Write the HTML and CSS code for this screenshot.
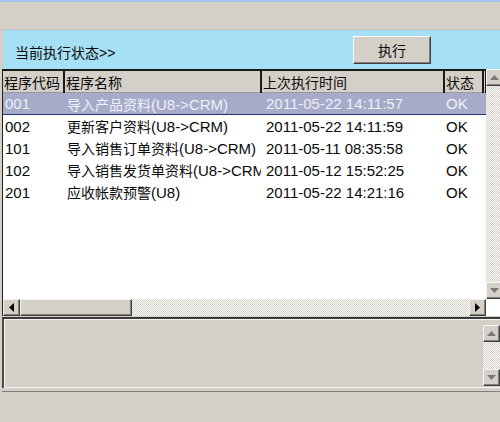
FILE: index.html
```html
<!DOCTYPE html>
<html>
<head>
  <title>程序执行状态</title>
  <link rel="stylesheet" href="styles.css">
</head>
<body>
  <div class="window">
    <div class="topbar"></div>

    <div class="panel">
      <span class="status">当前执行状态&gt;&gt;</span>
      <button class="btn">执行</button>
    </div>

    <div class="grid">
      <div class="grid-main">
        <div class="table-wrap">
          <table class="jobs">
            <colgroup>
              <col class="w-code">
              <col class="w-name">
              <col class="w-time">
              <col class="w-state">
              <col class="w-pad">
            </colgroup>
            <thead>
              <tr>
                <th>程序代码</th>
                <th>程序名称</th>
                <th>上次执行时间</th>
                <th>状态</th>
                <th></th>
              </tr>
            </thead>
            <tbody>
              <tr class="sel">
                <td>001</td>
                <td class="name"><span class="zh">导入产品资料</span>(U8-&gt;CRM)</td>
                <td class="time">2011-05-22 14:11:57</td>
                <td>OK</td>
                <td></td>
              </tr>
              <tr>
                <td>002</td>
                <td class="name"><span class="zh">更新客户资料</span>(U8-&gt;CRM)</td>
                <td class="time">2011-05-22 14:11:59</td>
                <td>OK</td>
                <td></td>
              </tr>
              <tr>
                <td>101</td>
                <td class="name"><span class="zh">导入销售订单资料</span>(U8-&gt;CRM)</td>
                <td class="time">2011-05-11 08:35:58</td>
                <td>OK</td>
                <td></td>
              </tr>
              <tr>
                <td>102</td>
                <td class="name"><span class="zh">导入销售发货单资料</span>(U8-&gt;CRM)</td>
                <td class="time">2011-05-12 15:52:25</td>
                <td>OK</td>
                <td></td>
              </tr>
              <tr>
                <td>201</td>
                <td class="name"><span class="zh">应收帐款预警</span>(U8)</td>
                <td class="time">2011-05-22 14:21:16</td>
                <td>OK</td>
                <td></td>
              </tr>
            </tbody>
          </table>
        </div>

        <div class="vscroll">
          <div class="sbtn">
            <svg width="9" height="5" viewBox="0 0 9 5"><polygon points="4.5,0 9,5 0,5" fill="#7a7a7a"/></svg>
          </div>
          <div class="track"></div>
          <div class="sbtn">
            <svg width="9" height="5" viewBox="0 0 9 5"><polygon points="0,0 9,0 4.5,5" fill="#7a7a7a"/></svg>
          </div>
        </div>
      </div>

      <div class="hscroll">
        <div class="sbtn">
          <svg width="5" height="9" viewBox="0 0 5 9"><polygon points="5,0 5,9 0,4.5" fill="#000"/></svg>
        </div>
        <div class="thumb"></div>
        <div class="track"></div>
        <div class="sbtn">
          <svg width="5" height="9" viewBox="0 0 5 9"><polygon points="0,0 5,4.5 0,9" fill="#000"/></svg>
        </div>
        <div class="corner"></div>
      </div>
    </div>

    <div class="memo">
      <div class="memo-body"></div>
      <div class="vscroll short">
        <div class="sbtn">
          <svg width="9" height="5" viewBox="0 0 9 5"><polygon points="4.5,0 9,5 0,5" fill="#7a7a7a"/></svg>
        </div>
        <div class="track"></div>
        <div class="sbtn">
          <svg width="9" height="5" viewBox="0 0 9 5"><polygon points="0,0 9,0 4.5,5" fill="#7a7a7a"/></svg>
        </div>
      </div>
    </div>

    <div class="footer"></div>
  </div>
</body>
</html>
```

FILE: styles.css
```css
html, body {
  margin: 0;
  height: 422px;
  overflow: hidden;
  background: #d4d0c8;
}
body {
  font-family: "Liberation Sans", "Noto Sans CJK SC", sans-serif;
  font-size: 15px;
  color: #0a0a0a;
}
.window {
  width: 503px;
}
.topbar {
  height: 27px;
  border-top: 2px solid #a3c2ea;
  border-bottom: 1px solid #cdc0bc;
}

/* blue status strip */
.panel {
  display: flex;
  align-items: center;
  height: 39px;
  margin-left: 3px;
  background: #a6e0f4;
}
.status {
  padding: 5px 0 0 12px;
  font-size: 14px;
}
.btn {
  margin: 0 72px 0 auto;
  width: 78px;
  height: 28px;
  font: inherit;
  font-size: 14px;
  color: #0a0a0a;
  background: #d4d0c8;
  border: 1px solid;
  border-color: #fff #404040 #404040 #fff;
  box-shadow: inset -1px -1px 0 #808080;
  padding: 0;
}

/* data grid */
.grid {
  margin-left: 2px;
  border-left: 1px solid #222;
  background: #fff;
}
.grid-main {
  display: flex;
  height: 230px;
}
.table-wrap {
  flex: 1;
  overflow: hidden;
}
.jobs {
  border-collapse: collapse;
  table-layout: fixed;
  width: 483px;
}
.w-code { width: 61px; }
.w-name { width: 197px; }
.w-time { width: 183px; }
.w-state { width: 39px; }
.w-pad { width: 3px; }
.jobs th {
  height: 21px;
  padding: 0 0 0 1px;
  text-align: left;
  font-weight: normal;
  font-size: 14px;
  background: #d4d0c8;
  border-top: 2px solid #1a1a1a;
  border-right: 2px solid #1a1a1a;
  border-bottom: 1px solid #9a9a9a;
  white-space: nowrap;
  overflow: hidden;
}
.jobs td {
  height: 22px;
  padding: 0 0 0 2px;
  white-space: nowrap;
  overflow: hidden;
}
.jobs td.name {
  padding-left: 3px;
}
.jobs td.time {
  padding-left: 5px;
}
.zh {
  font-size: 14px;
}
.jobs tr.sel td {
  height: 21px;
  background: #a7abca;
  color: #eef0f8;
  border-bottom: 1px solid #26307c;
}
.jobs tr.sel td:last-child {
  border-right: 1px solid #26307c;
}

/* scrollbars */
.vscroll {
  display: flex;
  flex-direction: column;
  width: 17px;
}
.hscroll {
  display: flex;
  height: 17px;
}
.sbtn {
  display: flex;
  align-items: center;
  justify-content: center;
  width: 17px;
  height: 17px;
  box-sizing: border-box;
  flex: none;
  background: #d4d0c8;
  border: 1px solid;
  border-color: #f4f4f4 #404040 #404040 #f4f4f4;
  box-shadow: inset -1px -1px 0 #808080;
}
.track {
  flex: 1;
  background: repeating-conic-gradient(#d4d0c8 0 25%, #fbfbfb 0 50%) 0 0 / 2px 2px;
}
.thumb {
  width: 112px;
  box-sizing: border-box;
  background: #d4d0c8;
  border: 1px solid;
  border-color: #f4f4f4 #404040 #404040 #f4f4f4;
  box-shadow: inset -1px -1px 0 #808080;
}
.corner {
  width: 17px;
  background: #fff;
}

/* notes box */
.memo {
  display: flex;
  height: 61px;
  margin: 1px 0 0 2px;
  padding: 6px 0 2px;
  border-top: 2px solid #3a3a3a;
  border-left: 2px solid #4a4a4a;
  box-shadow: inset 1px 1px 0 #f4f4f4, inset 0 -1px 0 #f4f4f4;
}
.memo-body {
  flex: 1;
}
.vscroll.short {
  margin-right: 3px;
}
.footer {
  border-top: 1px solid #808080;
  margin: 3px 0 0 2px;
}
```
